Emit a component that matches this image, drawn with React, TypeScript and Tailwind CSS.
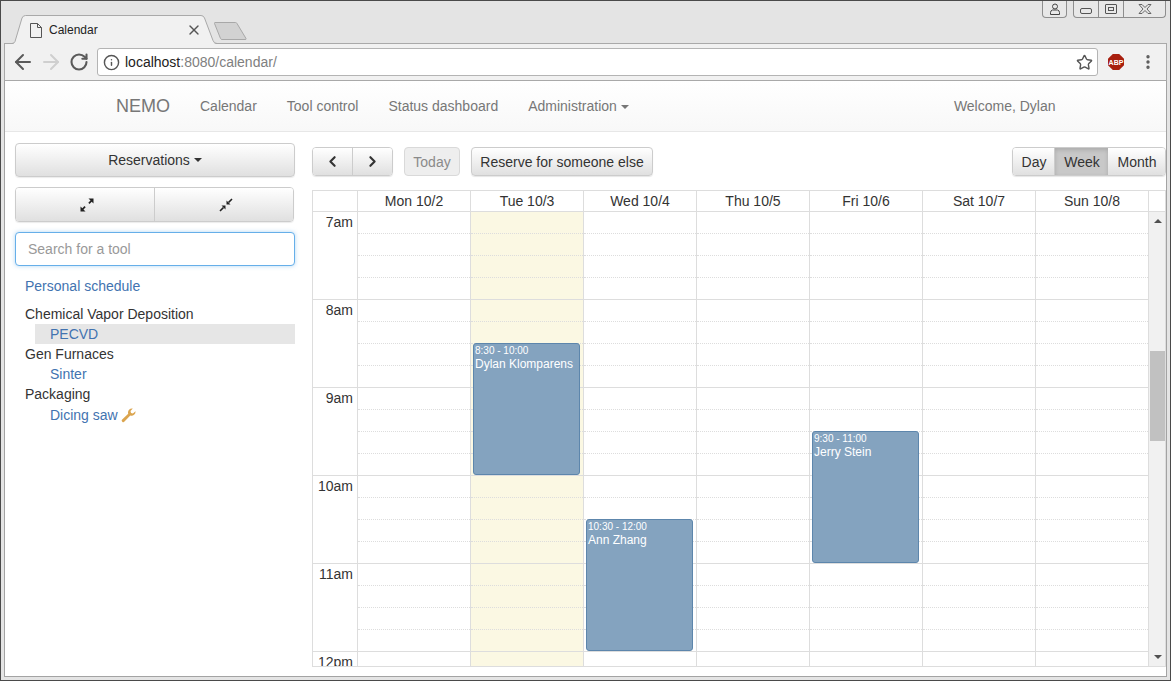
import React from 'react';
import {
  ArrowLeft,
  ArrowRight,
  ChevronLeft,
  ChevronRight,
  Info,
  MoreVertical,
  RotateCw,
  Star,
  X,
} from 'lucide-react';

const font = "font-['Liberation_Sans',Arial,sans-serif]";

const days = ['Mon 10/2', 'Tue 10/3', 'Wed 10/4', 'Thu 10/5', 'Fri 10/6', 'Sat 10/7', 'Sun 10/8'];
const hours = ['7am', '8am', '9am', '10am', '11am'];

const events = [
  { day: 1, top: 131, time: '8:30 - 10:00', name: 'Dylan Klomparens' },
  { day: 2, top: 307, time: '10:30 - 12:00', name: 'Ann Zhang' },
  { day: 4, top: 219, time: '9:30 - 11:00', name: 'Jerry Stein' },
];

function Caret() {
  return <span className="ml-1 inline-block border-x-4 border-t-4 border-x-transparent border-t-[#333] align-middle" />;
}

function HourSlots() {
  return (
    <>
      {hours.map((h) => (
        <div key={h} className="h-[88px] border-b border-[#ddd]">
          <div className="h-[22px] border-b border-dotted border-[#ddd]" />
          <div className="h-[22px] border-b border-dotted border-[#ddd]" />
          <div className="h-[22px] border-b border-dotted border-[#ddd]" />
        </div>
      ))}
    </>
  );
}

function Chrome() {
  return (
    <div className="shrink-0">
      {/* Tab strip */}
      <div className="relative h-[42px] bg-[#e4e4e4]">
        <svg width="220" height="31" viewBox="0 0 220 31" className="absolute left-0 top-[13px]">
          <path d="M11 31V30Q13 30 14 28L21 4Q22 1.5 24.500 1.500H200Q202.500 1.500 203.500 4L212 27Q213 30 216 30V31Z" fill="#f1f1f1" />
          <path d="M11 29.500Q13 29.500 14 27.500L21 4Q22 1.500 24.500 1.500H200Q202.500 1.500 203.500 4L212 26.500Q213 29.500 216 29.500" fill="none" stroke="#a9a9a9" />
        </svg>
        <svg width="12" height="15" viewBox="0 0 12 15" fill="none" stroke="#555" className="absolute left-[29px] top-[22px]">
          <path d="M.5 .5h7l4 4v10h-11zM7.500 .5v4h4" />
        </svg>
        <span className="absolute left-[48px] top-[20px] text-[12px] leading-[18px] text-[#222]">Calendar</span>
        <X size={16} strokeWidth={2} className="absolute left-[185px] top-[21px] text-[#555]" />
        <svg width="36" height="22" viewBox="0 0 36 22" className="absolute left-[212px] top-[20px]">
          <path d="M2 1.500h20.500q1 0 1.500 1l9 15q.5 1-1 1h-23q-1 0-1.500-1l-6-15q-.5-1 1-1z" fill="#d2d2d2" stroke="#a8a8a8" />
        </svg>
        {/* Window buttons */}
        <div className="absolute right-[103px] top-0 flex h-[17px] w-[25px] items-center justify-center rounded-b-[4px] border-x border-b border-[#8e8e8e] bg-[#e8e8e8]">
          <svg width="12" height="12" viewBox="0 0 12 12" fill="none" stroke="#444">
            <circle cx="6" cy="3.500" r="2.500" />
            <path d="M1.500 11.500v-2q0-2 2-2.500h5q2 .5 2 2.500v2z" />
          </svg>
        </div>
        <div className="absolute right-[4px] top-0 flex h-[17px] w-[93px] rounded-b-[4px] border-x border-b border-[#8e8e8e] bg-[#e8e8e8]">
          <div className="flex w-[25px] items-center justify-center border-r border-[#8e8e8e]">
            <span className="mt-[4px] block h-[6px] w-[12px] rounded-[2px] border border-[#555]" />
          </div>
          <div className="flex w-[25px] items-center justify-center border-r border-[#8e8e8e]">
            <span className="flex h-[10px] w-[12px] items-center justify-center rounded-[1px] border border-[#555]">
              <span className="block h-[4px] w-[6px] border border-[#555]" />
            </span>
          </div>
          <div className="flex flex-1 items-center justify-center">
            <svg width="14" height="10" viewBox="0 0 14 10" fill="none" stroke="#666">
              <path d="M1 .5h3l3 3 3-3h3l-4 4.500 4 4.500h-3l-3-3-3 3h-3l4-4.500z" />
            </svg>
          </div>
        </div>
      </div>
      {/* Toolbar */}
      <div className="mx-[3px] flex h-[38px] items-center border border-[#a9a9a9] bg-[#f1f1f1]">
        <div className="flex w-[92px] items-center">
          <ArrowLeft size={24} strokeWidth={2} className="ml-[6px] text-[#5a5a5a]" />
          <ArrowRight size={24} strokeWidth={2} className="ml-[4px] text-[#cfcfcf]" />
          <RotateCw size={20} strokeWidth={2.5} className="ml-[6px] text-[#5a5a5a]" />
        </div>
        <div className="flex h-[28px] w-[1001px] items-center rounded-[3px] border border-[#b4b4b4] bg-white pl-[5px] pr-[4px]">
          <Info size={17} strokeWidth={2} className="text-[#555]" />
          <span className="ml-[5px] text-[14px] leading-none text-[#222]">
            localhost<span className="text-[#808080]">:8080/calendar/</span>
          </span>
          <Star size={17} strokeWidth={2} className="ml-auto text-[#555]" />
        </div>
        <svg width="16" height="16" viewBox="0 0 16 16" className="ml-[10px]">
          <path d="M4.800 0h6.400L16 4.800v6.400L11.200 16H4.800L0 11.200V4.800z" fill="#a81f0e" />
          <text x="8" y="10.500" fontSize="7" fontWeight="700" fill="#fff" textAnchor="middle" fontFamily="Liberation Sans">ABP</text>
        </svg>
        <MoreVertical size={18} strokeWidth={2.5} className="ml-[15px] text-[#5a5a5a]" />
      </div>
    </div>
  );
}

function Navbar() {
  return (
    <nav className="flex h-[51px] shrink-0 items-center border-b border-[#e7e7e7] bg-gradient-to-b from-white to-[#f8f8f8] text-[14px] text-[#777]">
      <span className="ml-[111px] text-[18px]">NEMO</span>
      <span className="ml-[30px]">Calendar</span>
      <span className="ml-[30px]">Tool control</span>
      <span className="ml-[30px]">Status dashboard</span>
      <span className="ml-[30px]">Administration<span className="ml-1 inline-block border-x-4 border-t-4 border-x-transparent border-t-[#777] align-middle" /></span>
      <span className="ml-[325px]">Welcome, Dylan</span>
    </nav>
  );
}

function Sidebar() {
  const btn = 'flex items-center justify-center bg-gradient-to-b from-white to-[#e0e0e0] border-[#ccc] text-[#333]';
  return (
    <aside className="ml-[10px] w-[280px] shrink-0 pt-[11px] text-[14px]">
      <div className={`${btn} h-[34px] rounded-[4px] border shadow-[0_1px_1px_rgba(0,0,0,0.08)]`}>
        Reservations
        <Caret />
      </div>
      <div className="mt-[10px] flex h-[35px] w-[279px] overflow-hidden rounded-[4px] border border-[#ccc] shadow-[0_1px_1px_rgba(0,0,0,0.08)]">
        <div className={`${btn} flex-1 border-r`}>
          <svg width="16" height="16" viewBox="0 0 16 16" fill="#222" className="ml-[3px]">
            <path d="M9.500 1.500h5v5l-1.800-1.800-2.200 2.200-1.200-1.200 2.200-2.200zM6.500 14.500h-5v-5l1.800 1.800 2.200-2.200 1.200 1.200-2.200 2.200z" />
          </svg>
        </div>
        <div className={`${btn} flex-1`}>
          <svg width="14" height="14" viewBox="0 0 14 14" fill="#222" className="ml-[3px]">
            <path d="M7.500 6.500V2.500L11.500 6.500zM6.500 7.500V11.500L2.500 7.500z" />
            <path d="M9.500 4.500L13 1M4.500 9.500L1 13" stroke="#222" strokeWidth="1.6" />
          </svg>
        </div>
      </div>
      <div className="mt-[10px] flex h-[34px] items-center rounded-[4px] border border-[#66afe9] bg-white pl-[12px] text-[#999] shadow-[0_0_4px_rgba(102,175,233,0.5)]">
        Search for a tool
      </div>
      <div className="mt-[10px] pl-[10px] leading-[20px] text-[#4273b0]">Personal schedule</div>
      <div className="mt-[8px] text-[#333]">
        <div className="pl-[10px] leading-[20px]">Chemical Vapor Deposition</div>
        <div className="ml-[20px] bg-[#e6e6e6] pl-[15px] leading-[20px] text-[#4273b0]">PECVD</div>
        <div className="pl-[10px] leading-[20px]">Gen Furnaces</div>
        <div className="pl-[35px] leading-[20px] text-[#4273b0]">Sinter</div>
        <div className="pl-[10px] leading-[20px]">Packaging</div>
        <div className="mt-px flex items-center pl-[35px] leading-[21px] text-[#4273b0]">
          Dicing saw
          <svg width="15" height="15" viewBox="0 0 15 15" className="ml-[3px]" fill="#dba54f">
            <path d="M14.500 3.200a4 4 0 0 1-5.200 4.300L3.500 13.600a1.500 1.500 0 0 1-2.300-2.200l6-5.700A4 4 0 0 1 11.800.6L9.500 3l.5 1.900 1.900.5z" />
          </svg>
        </div>
      </div>
    </aside>
  );
}

function Calendar() {
  const btn = 'flex items-center justify-center bg-gradient-to-b from-white to-[#e0e0e0] border-[#ccc] text-[#333]';
  return (
    <main className="ml-[17px] flex min-w-0 flex-1 flex-col pt-[15px] text-[14px] text-[#333]">
      {/* Toolbar */}
      <div className="flex h-[43px] shrink-0 items-start">
        <div className="flex overflow-hidden rounded-[4px] border border-[#ccc] shadow-[0_1px_1px_rgba(0,0,0,0.1)]">
          <div className={`${btn} h-[27px] w-[40px] border-r`}>
            <ChevronLeft size={17} strokeWidth={3} className="text-[#333]" />
          </div>
          <div className={`${btn} h-[27px] w-[39px]`}>
            <ChevronRight size={17} strokeWidth={3} className="text-[#333]" />
          </div>
        </div>
        <div className="ml-[11px] flex h-[29px] w-[56px] items-center justify-center rounded-[4px] border border-[#d9d9d9] bg-[#eee] pt-px text-[#8a8a8a]">Today</div>
        <div className={`${btn} ml-[11px] h-[29px] w-[182px] rounded-[4px] border pt-px shadow-[0_1px_1px_rgba(0,0,0,0.1)]`}>Reserve for someone else</div>
        <div className="ml-auto flex overflow-hidden rounded-[4px] border border-[#ccc] shadow-[0_1px_1px_rgba(0,0,0,0.1)]">
          <div className={`${btn} h-[27px] w-[42px] border-r pl-px pt-px`}>Day</div>
          <div className="flex h-[27px] w-[53px] items-center justify-center bg-[#c8c8c8] pl-px pt-px shadow-[inset_0_2px_4px_rgba(0,0,0,0.15)]">Week</div>
          <div className={`${btn} h-[27px] w-[57px] pl-px pt-px`}>Month</div>
        </div>
      </div>
      {/* Grid */}
      <div className="flex h-[477px] w-[854px] flex-col overflow-hidden border border-[#ddd] bg-white">
        <div className="flex h-[21px] shrink-0 border-b border-[#ddd]">
          <div className="w-[45px] shrink-0 border-r border-[#ddd]" />
          {days.map((d) => (
            <div key={d} className="w-[113px] shrink-0 border-r border-[#ddd] text-center leading-[21px]">
              {d}
            </div>
          ))}
        </div>
        <div className="flex min-h-0 flex-1">
          <div className="w-[45px] shrink-0 border-r border-[#ddd] text-right">
            {[...hours, '12pm'].map((h) => (
              <div key={h} className="h-[88px] border-b border-[#ddd] pr-[4px] leading-[20px]">
                {h}
              </div>
            ))}
          </div>
          {days.map((d, i) => (
            <div key={d} className={`relative w-[113px] shrink-0 border-r border-[#ddd] ${i === 1 ? 'bg-[#fbf8e3]' : ''}`}>
              <HourSlots />
              {events
                .filter((e) => e.day === i)
                .map((e) => (
                  <div
                    key={e.name}
                    className="absolute left-[2px] h-[132px] w-[107px] rounded-[3px] border border-[#5d86ac] bg-[#84a3bf] px-[1px] text-white"
                    style={{ top: e.top }}
                  >
                    <div className="text-[10px] leading-[13px]">{e.time}</div>
                    <div className="text-[12px] leading-[14px]">{e.name}</div>
                  </div>
                ))}
            </div>
          ))}
          {/* Scrollbar */}
          <div className="relative flex-1 bg-[#f1f1f1]">
            <span className="absolute left-[5px] top-[7px] border-x-[4px] border-b-[4px] border-x-transparent border-b-[#505050]" />
            <div className="absolute left-[1px] top-[139px] h-[90px] w-[15px] bg-[#c1c1c1]" />
            <span className="absolute bottom-[7px] left-[5px] border-x-[4px] border-t-[4px] border-x-transparent border-t-[#505050]" />
          </div>
        </div>
      </div>
    </main>
  );
}

export default function App() {
  return (
    <div className={`${font} flex h-[681px] w-[1171px] flex-col overflow-hidden border border-[#4a4a4a] bg-[#e4e4e4] pb-[3px] text-[14px]`}>
      <Chrome />
      <div className="mx-[3px] flex min-h-0 flex-1 flex-col border-x border-b border-[#a3a3a3] bg-white">
        <Navbar />
        <div className="flex min-h-0 flex-1">
          <Sidebar />
          <Calendar />
        </div>
      </div>
    </div>
  );
}
